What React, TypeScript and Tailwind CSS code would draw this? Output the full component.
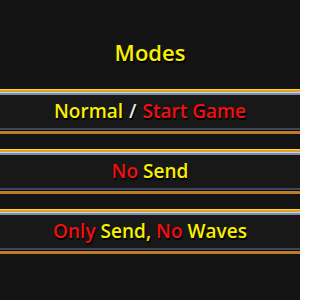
import React from 'react';

const Y = 'text-[#f8f000]';
const R = 'text-[#f01010]';

function Band({ children }: { children: React.ReactNode }) {
    return (
        <div className="flex flex-col">
            <div className="h-[1px] bg-[#ffd24a]" />
            <div className="h-[2px] bg-[#e0a020]" />
            <div className="h-[1px] bg-[#c8d4ec]" />
            <div className="h-[2px] bg-[#7d8cab]" />
            <div className="h-[33px] bg-[#181818] flex items-center justify-center">
                {children}
            </div>
            <div className="h-[2px] bg-[#3a4760]" />
            <div className="h-[1px] bg-[#0d0d0d]" />
            <div className="h-[3px] bg-[#c27a26]" />
        </div>
    );
}

export default function App() {
    return (
        <div
            className="w-[300px] h-[300px] bg-[#141414] flex flex-col overflow-hidden"
            style={{ fontFamily: '"Open Sans", "Liberation Sans", sans-serif' }}
        >
            <div className="h-[89px] pt-[15px] flex items-center justify-center">
                <span className={`text-[22px] font-semibold ${Y} [text-shadow:1px_2px_1px_#000]`}>Modes</span>
            </div>
            <div className="flex flex-col gap-[15px] text-[19px] font-semibold [text-shadow:1px_2px_1px_#000]">
                <Band>
                    <span className={Y}>Normal</span>
                    <span className="text-[#e8e8e8] mx-[6px]">/</span>
                    <span className={R}>Start Game</span>
                </Band>
                <Band>
                    <span className={R}>No</span>
                    <span className={`${Y} ml-[5px]`}>Send</span>
                </Band>
                <Band>
                    <span className={R}>Only</span>
                    <span className={`${Y} ml-[5px]`}>Send,</span>
                    <span className={`${R} ml-[5px]`}>No</span>
                    <span className={`${Y} ml-[5px]`}>Waves</span>
                </Band>
            </div>
        </div>
    );
}
